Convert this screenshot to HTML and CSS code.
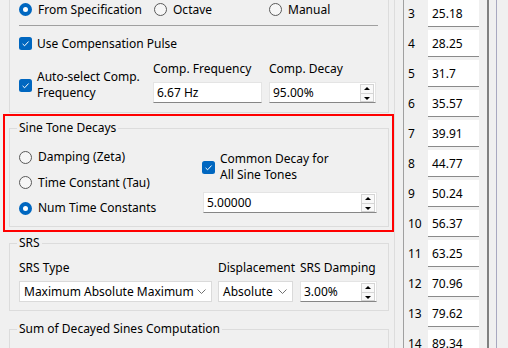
FILE: index.html
```html
<!DOCTYPE html>
<html>
<head>
  <meta charset="utf8" />
  <meta name="viewport" content="width=device-width, initial-scale=1" >
  <title>Sine Tone Settings</title>
  <link rel="stylesheet" href="styles.css">
</head>
<body>
  <div class="app">
    <div class="main">
      <div class="group group-top">
        <div class="mode-row">
          <label class="radio radio-spec"><span class="dot on"></span>From Specification</label>
          <label class="radio radio-oct"><span class="dot"></span>Octave</label>
          <label class="radio"><span class="dot"></span>Manual</label>
        </div>
        <div class="sep"></div>
        <label class="check check-pulse">
          <svg class="box" width="13" height="13" viewBox="0 0 13 13"><rect width="13" height="13" rx="2.5" fill="#0067c0"/><path d="M3.6 6.9 L5.6 8.8 L9.6 4.5" fill="none" stroke="#fff" stroke-width="1"/></svg>
          Use Compensation Pulse
        </label>
        <div class="comp-row">
          <label class="check check-auto">
            <svg class="box" width="13" height="13" viewBox="0 0 13 13"><rect width="13" height="13" rx="2.5" fill="#0067c0"/><path d="M3.6 6.9 L5.6 8.8 L9.6 4.5" fill="none" stroke="#fff" stroke-width="1"/></svg>
            <span>Auto-select Comp.<br>Frequency</span>
          </label>
          <div class="field f-freq">
            <div class="cap">Comp. Frequency</div>
            <div class="input">6.67 Hz</div>
          </div>
          <div class="field f-decay">
            <div class="cap">Comp. Decay</div>
            <div class="input spin">95.00%
              <span class="spin-btns"><span class="up"></span><span class="down"></span></span>
            </div>
          </div>
        </div>
      </div>

      <div class="highlight">
        <fieldset class="group decays">
          <legend>Sine Tone Decays</legend>
          <div class="decay-cols">
            <div class="decay-radios">
              <label class="radio"><span class="dot"></span>Damping (Zeta)</label>
              <label class="radio"><span class="dot"></span>Time Constant (Tau)</label>
              <label class="radio"><span class="dot on"></span>Num Time Constants</label>
            </div>
            <div class="decay-common">
              <label class="check">
                <svg class="box" width="13" height="13" viewBox="0 0 13 13"><rect width="13" height="13" rx="2.5" fill="#0067c0"/><path d="M3.6 6.9 L5.6 8.8 L9.6 4.5" fill="none" stroke="#fff" stroke-width="1"/></svg>
                <span>Common Decay for<br>All Sine Tones</span>
              </label>
              <div class="input spin num-const">5.00000
                <span class="spin-btns"><span class="up"></span><span class="down"></span></span>
              </div>
            </div>
          </div>
        </fieldset>
      </div>

      <fieldset class="group srs">
        <legend>SRS</legend>
        <div class="srs-row">
          <div class="field f-type">
            <div class="cap">SRS Type</div>
            <div class="select">Maximum Absolute Maximum
              <svg class="chev" width="9" height="5" viewBox="0 0 9 5"><path d="M0.5 0.5 L4.5 4.5 L8.5 0.5" fill="none" stroke="#707070" stroke-width="1"/></svg>
            </div>
          </div>
          <div class="field f-disp">
            <div class="cap">Displacement</div>
            <div class="select">Absolute
              <svg class="chev" width="9" height="5" viewBox="0 0 9 5"><path d="M0.5 0.5 L4.5 4.5 L8.5 0.5" fill="none" stroke="#707070" stroke-width="1"/></svg>
            </div>
          </div>
          <div class="field f-damp">
            <div class="cap">SRS Damping</div>
            <div class="input spin">3.00%
              <span class="spin-btns"><span class="up"></span><span class="down"></span></span>
            </div>
          </div>
        </div>
      </fieldset>

      <fieldset class="group sum">
        <legend>Sum of Decayed Sines Computation</legend>
      </fieldset>
    </div>

    <div class="splitter"></div>

    <div class="table-pane">
      <div class="trow"><span class="num">3</span><span class="cell">25.18</span></div>
      <div class="trow"><span class="num">4</span><span class="cell">28.25</span></div>
      <div class="trow"><span class="num">5</span><span class="cell">31.7</span></div>
      <div class="trow"><span class="num">6</span><span class="cell">35.57</span></div>
      <div class="trow"><span class="num">7</span><span class="cell">39.91</span></div>
      <div class="trow"><span class="num">8</span><span class="cell">44.77</span></div>
      <div class="trow"><span class="num">9</span><span class="cell">50.24</span></div>
      <div class="trow"><span class="num">10</span><span class="cell">56.37</span></div>
      <div class="trow"><span class="num">11</span><span class="cell">63.25</span></div>
      <div class="trow"><span class="num">12</span><span class="cell">70.96</span></div>
      <div class="trow"><span class="num">13</span><span class="cell">79.62</span></div>
      <div class="trow"><span class="num">14</span><span class="cell">89.34</span></div>
    </div>

    <div class="scroll"></div>
  </div>
</body>
</html>
```

FILE: styles.css
```css
body{
  margin: 0;
  background: #f0f0f0;
  font-family: "Noto Sans", "Open Sans", sans-serif;
  font-size: 12px;
  color: #000;
}
.app{
  display: flex;
  height: 348px;
  overflow: hidden;
}
.main{
  width: 394px;
  flex: none;
}

/* group boxes */
.group{
  box-sizing: border-box;
  width: 380px;
  margin: 0 0 0 9px;
  border: 1px solid #dcdcdc;
  padding: 0 9px;
}
.group-top{
  height: 113px;
  border-top: none;
}
fieldset.group{
  min-width: 0;
  padding: 0 9px 8px 7px;
}
legend{
  padding: 0 2px;
  line-height: 16px;
}

/* radios and checks */
.radio, .check{
  display: flex;
  align-items: center;
  line-height: 16px;
}
.dot{
  box-sizing: border-box;
  width: 13px;
  height: 13px;
  border-radius: 50%;
  border: 1px solid #595959;
  background: #f6f6f6;
  margin-right: 6px;
  flex: none;
}
.dot.on{
  border: 4px solid #0067c0;
  background: #fff;
}
.box{
  flex: none;
  margin-right: 5px;
}

.mode-row{
  display: flex;
  height: 19px;
  align-items: center;
}
.radio-spec{ width: 135px; }
.radio-oct{ width: 115px; }

.sep{
  height: 1px;
  background: #a0a0a0;
  margin: 6px 1px 0 0;
}
.check-pulse{
  height: 19px;
  margin-top: 8px;
}

.comp-row{
  display: flex;
  margin-top: 8px;
}
.check-auto{
  width: 134px;
  margin-top: 6px;
}
.field{
  display: flex;
  flex-direction: column;
}
.cap{
  line-height: 16px;
  margin-bottom: 5px;
  white-space: nowrap;
}
.f-freq{ width: 109px; }
.f-decay{ width: 107px; margin-left: 7px; }

/* text boxes */
.input{
  box-sizing: border-box;
  height: 21px;
  background: #fff;
  border: 1px solid #e4e4e4;
  border-bottom: 1px solid #868686;
  padding-left: 3px;
  line-height: 19px;
  position: relative;
}
.spin-btns{
  position: absolute;
  right: 1px;
  top: 1px;
  width: 14px;
  height: 18px;
  display: flex;
  flex-direction: column;
}
.spin-btns span{
  flex: 1;
  border: 1px solid #d4d4d4;
  background: #f9f9f9;
  position: relative;
}
.spin-btns span + span{
  border-top: none;
}
.spin-btns span:after{
  content: "";
  position: absolute;
  left: 3px;
  top: 2px;
  border-left: 3px solid transparent;
  border-right: 3px solid transparent;
}
.spin-btns .up:after{
  border-bottom: 3px solid #000;
}
.spin-btns .down:after{
  border-top: 3px solid #000;
  top: 3px;
}

/* sine tone decays */
.highlight{
  box-sizing: border-box;
  width: 391px;
  margin: 1px 0 0 3px;
  border: 2px solid #ff0000;
  padding: 4px 0 3px 4px;
}
.highlight .group{
  margin-left: 0;
}
.decay-cols{
  display: flex;
  padding: 11px 0 0 2px;
}
.decay-radios{
  width: 183px;
  display: flex;
  flex-direction: column;
  gap: 5.5px;
}
.decay-radios .radio{
  height: 20px;
}
.decay-common{
  flex: 1;
  margin-top: 4px;
}
.num-const{
  margin: 9px 0 0 1px;
  width: 174px;
}

/* srs */
.srs{
  margin-top: 3px;
  padding-bottom: 9px;
}
.srs-row{
  display: flex;
  padding: 9px 0 0 2px;
}
.f-type{ width: 193px; }
.f-disp{ width: 75px; margin-left: 6px; }
.f-damp{ width: 77px; margin-left: 7px; }
.select{
  box-sizing: border-box;
  height: 21px;
  background: #fff;
  border: 1px solid #dadada;
  padding-left: 4px;
  line-height: 19px;
  display: flex;
  justify-content: space-between;
  align-items: center;
  padding-right: 5px;
  white-space: nowrap;
}
.sum{
  margin-top: 10px;
  height: 60px;
}

/* right side */
.splitter{
  width: 9px;
  flex: none;
  border-left: 1px solid #dddddd;
  box-sizing: border-box;
}
.table-pane{
  width: 86px;
  flex: none;
  box-sizing: border-box;
  border-left: 1px solid #a0a0a0;
  border-right: 2px solid #808080;
}
.trow{
  display: flex;
  height: 27px;
  margin-bottom: 3px;
  align-items: center;
}
.num{
  width: 24px;
  padding-left: 4px;
  box-sizing: border-box;
}
.cell{
  box-sizing: border-box;
  width: 51px;
  height: 27px;
  background: #fff;
  border-bottom: 1px solid #8a8a8a;
  padding-left: 4px;
  line-height: 27px;
}
.scroll{
  flex: 1;
  margin-left: 7px;
  border-left: 1px solid #a8a8c0;
}
```
